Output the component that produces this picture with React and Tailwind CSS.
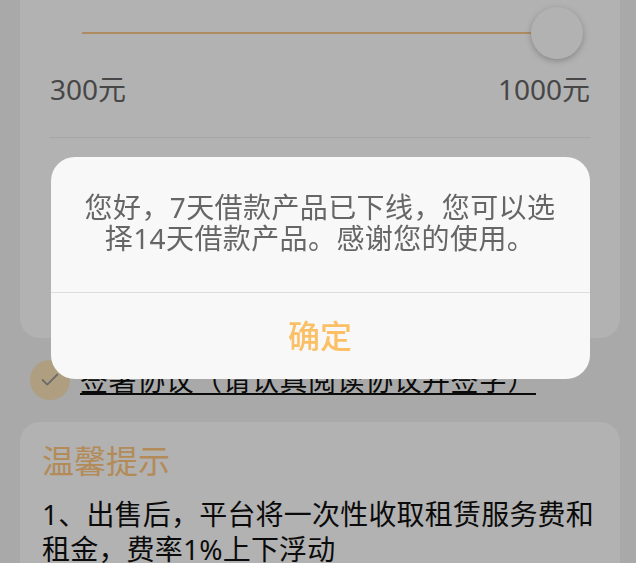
import { Check } from "lucide-react";

function AmountCard() {
  return (
    <div className="ml-[20px] mr-[16px] rounded-b-[20px] bg-white px-[30px]">
      <div className="flex h-[66px] items-center pl-[32px] pr-[7px]">
        <div className="h-[2px] flex-1 bg-[#f9c98a]" />
        <div className="h-[52px] w-[52px] rounded-full bg-white shadow-[0_2px_6px_rgba(0,0,0,0.25)]" />
      </div>
      <div className="mt-[5px] flex justify-between text-[28px] leading-[36px] text-[#666]">
        <span>300元</span>
        <span>1000元</span>
      </div>
      <div className="mt-[30px] h-px bg-[#eeeeee]" />
      <div className="h-[200px]" />
    </div>
  );
}

function AgreementRow() {
  return (
    <div className="mt-[22px] flex h-[40px] items-center pl-[30px]">
      <span className="flex h-[40px] w-[40px] items-center justify-center rounded-full bg-[#fbe3b8]">
        <Check size={22} strokeWidth={2} className="text-[#9a9a9a]" />
      </span>
      <span className="ml-[10px] text-[28px] leading-[40px] tracking-[0.5px] text-[#111] underline">
        签署协议（请认真阅读协议并签字）
      </span>
    </div>
  );
}

function TipsCard() {
  return (
    <div className="ml-[20px] mr-[16px] mt-[22px] rounded-[20px] bg-white px-[22px] pb-[20px] pt-[19px]">
      <h3 className="text-[32px] leading-[40px] text-[#ffc880]">温馨提示</h3>
      <p className="mt-[16px] text-[28px] leading-[35px] tracking-[0.2px] text-[#111]">
        1、出售后，平台将一次性收取租赁服务费和租金，费率1%上下浮动
      </p>
    </div>
  );
}

function NoticeDialog() {
  return (
    <div className="fixed inset-0 flex items-start justify-center bg-black/30 pl-[4px] pt-[157px]">
      <div className="w-[539px] overflow-hidden rounded-[24px] bg-[#f8f8f8]">
        <p className="px-[30px] pb-[38px] pt-[35px] text-center text-[28px] leading-[31px] tracking-[0.4px] text-[#666]">
          您好，7天借款产品已下线，您可以选择14天借款产品。感谢您的使用。
        </p>
        <button className="flex h-[87px] w-full items-center justify-center border-t border-[#dddddd] text-[32px] font-medium text-[#fbbf65]">
          确定
        </button>
      </div>
    </div>
  );
}

export default function App() {
  return (
    <div className="h-screen overflow-hidden bg-[#f2f2f2] font-['Noto_Sans','Noto_Sans_CJK_SC',sans-serif]">
      <AmountCard />
      <AgreementRow />
      <TipsCard />
      <NoticeDialog />
    </div>
  );
}
